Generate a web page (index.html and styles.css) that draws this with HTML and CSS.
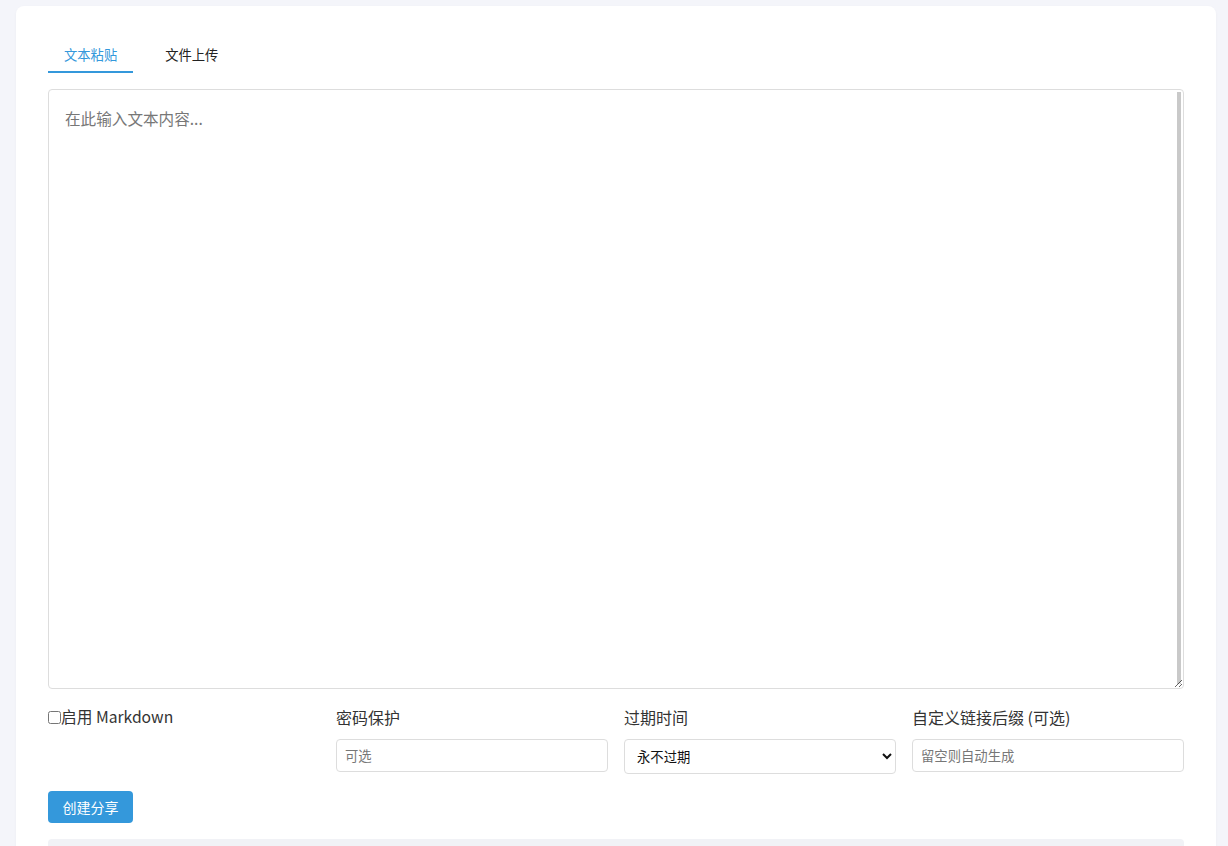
FILE: index.html
```html
<!DOCTYPE html>
<html lang="zh-CN">
<head>
<meta charset="utf-8">
<title>文本分享</title>
<link rel="stylesheet" href="styles.css">
</head>
<body>
<main class="card">
  <nav class="tabs">
    <button class="tab active" type="button">文本粘贴</button>
    <button class="tab" type="button">文件上传</button>
  </nav>
  <textarea class="editor" placeholder="在此输入文本内容..."></textarea>
  <div class="options">
    <label class="check"><input type="checkbox" class="checkbox">启用 Markdown</label>
    <div class="field">
      <label class="label">密码保护</label>
      <input class="input" type="text" placeholder="可选">
    </div>
    <div class="field">
      <label class="label">过期时间</label>
      <select class="select">
        <option>永不过期</option>
        <option>1小时</option>
        <option>1天</option>
        <option>1周</option>
      </select>
    </div>
    <div class="field">
      <label class="label">自定义链接后缀 (可选)</label>
      <input class="input" type="text" placeholder="留空则自动生成">
    </div>
  </div>
  <div class="actions">
    <button class="primary" type="button">创建分享</button>
  </div>
  <div class="result"></div>
</main>
</body>
</html>
```

FILE: styles.css
```css
* { box-sizing: border-box; }
html, body { height: 100%; }
body {
  margin: 0;
  padding: 6px 12px 0 16px;
  background: #f4f5fa;
  font-family: "Noto Sans", "Noto Sans CJK SC", sans-serif;
  color: #333;
  overflow: hidden;
}
.card {
  background: #fff;
  border-radius: 8px;
  padding: 32px 32px 40px;
  box-shadow: 0 1px 3px rgba(0,0,0,0.04);
}
.tabs {
  display: flex;
  gap: 16px;
  margin-bottom: 16px;
}
.tab {
  font-family: "Noto Sans CJK SC", sans-serif;
  font-size: 13.3px;
  line-height: 18px;
  padding: 8px 16px 7px;
  border: 0;
  border-bottom: 2px solid transparent;
  background: none;
  color: #222;
  cursor: pointer;
}
.tab.active {
  color: #3498db;
  border-bottom-color: #3498db;
}
.editor {
  display: block;
  width: 100%;
  height: 600px;
  padding: 16px;
  border: 1px solid #ddd;
  border-radius: 4px;
  font-family: "Noto Sans CJK SC", sans-serif;
  font-size: 15.6px;
  line-height: 24px;
  color: #333;
  resize: vertical;
  background: #fff linear-gradient(#c9c9c9, #c9c9c9) no-repeat;
  background-size: 4px calc(100% - 6px);
  background-position: right 2px top 2px;
  outline: none;
}
.editor::placeholder { color: #777; }
.options {
  display: grid;
  grid-template-columns: repeat(4, 1fr);
  gap: 16px;
  margin-top: 16px;
}
.check {
  display: flex;
  align-items: flex-start;
  font-family: "Noto Sans CJK SC", sans-serif;
  font-size: 15.7px;
  line-height: 24px;
  color: #333;
}
.checkbox {
  margin: 6px 0 0;
  width: 13px;
  height: 13px;
}
.field {
  display: flex;
  flex-direction: column;
  gap: 9px;
}
.label {
  font-family: "Noto Sans CJK SC", sans-serif;
  font-size: 16px;
  line-height: 25px;
  color: #333;
}
.input {
  height: 33px;
  padding: 0 8px;
  border: 1px solid #ddd;
  border-radius: 4px;
  font-family: "Noto Sans CJK SC", sans-serif;
  font-size: 13.33px;
  color: #333;
  outline: none;
}
.input::placeholder { color: #777; }
.select {
  height: 35px;
  padding: 0 8px;
  border: 1px solid #ddd;
  border-radius: 4px;
  background: #fff;
  font-family: "Noto Sans CJK SC", sans-serif;
  font-size: 13.33px;
  color: #111;
}
.actions {
  margin-top: 17px;
}
.primary {
  height: 32px;
  padding: 0 14.5px;
  border: 0;
  border-radius: 4px;
  background: #3498db;
  color: #fff;
  font-family: "Noto Sans CJK SC", sans-serif;
  font-size: 14px;
  cursor: pointer;
}
.result {
  margin-top: 16px;
  height: 60px;
  background: #f1f2f6;
  border-radius: 4px;
}
```
